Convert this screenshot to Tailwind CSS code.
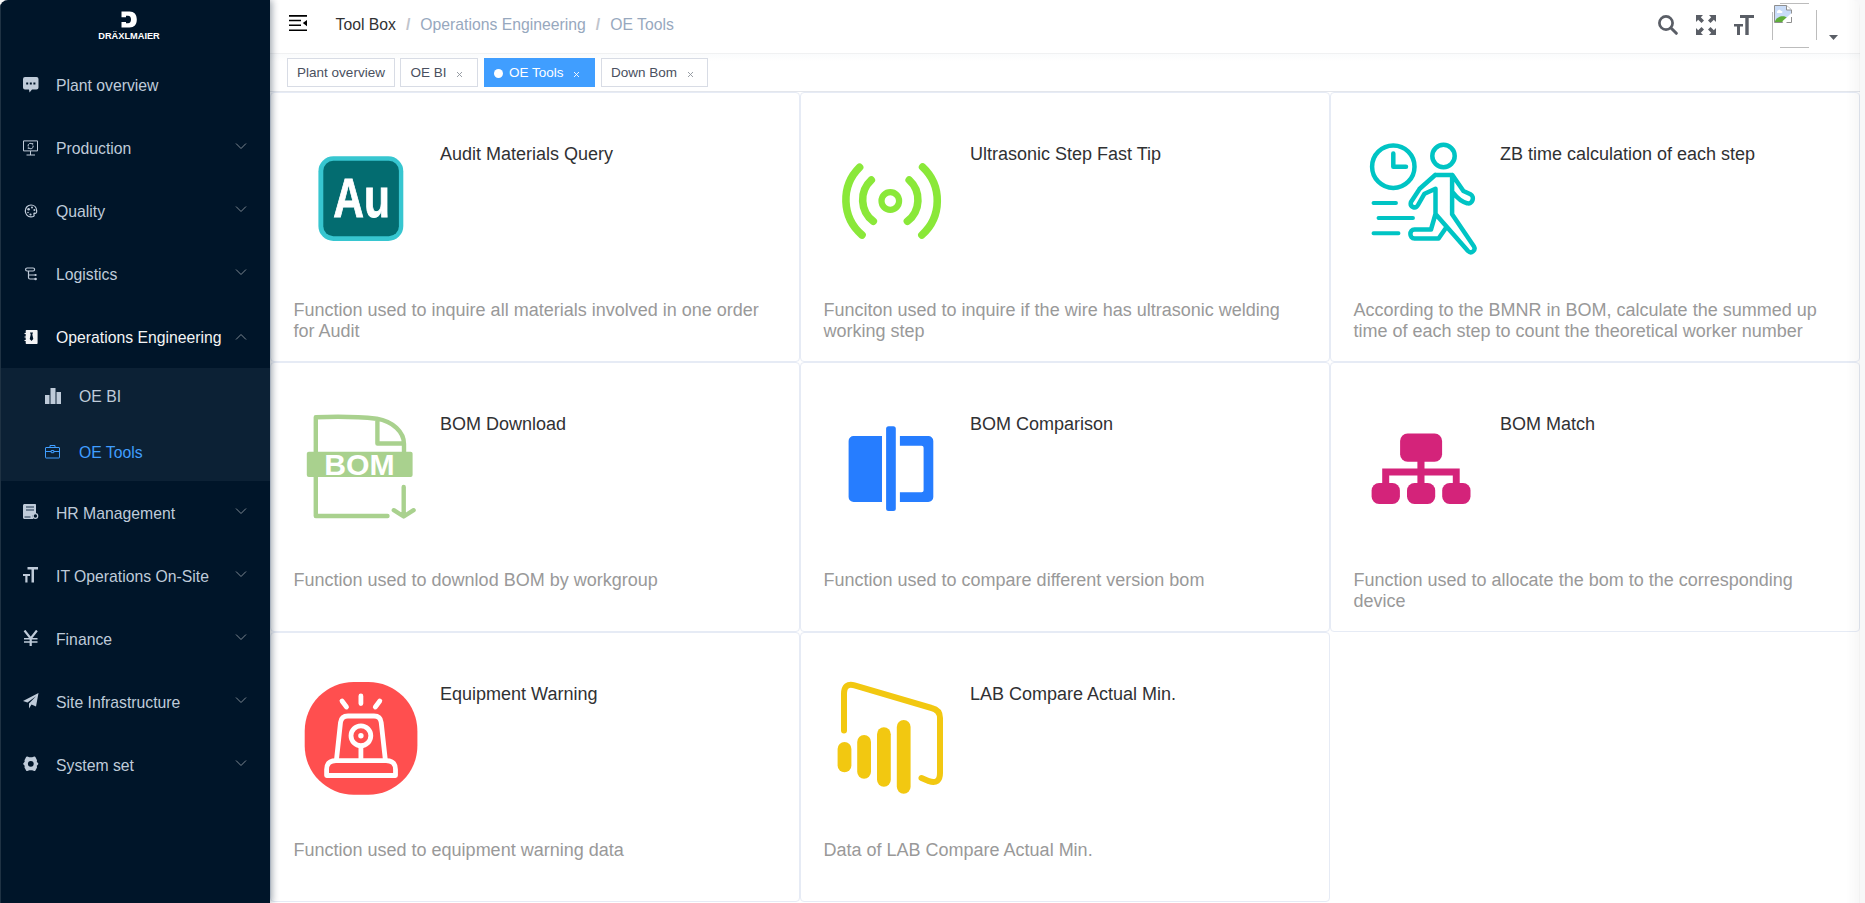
<!DOCTYPE html>
<html lang="en">
<head>
<meta charset="utf-8">
<title>OE Tools</title>
<script src="https://cdn.jsdelivr.net/npm/@tailwindcss/browser@4"></script>
</head>
<body class="bg-[#f7f7f8] font-['Liberation_Sans',Arial,sans-serif]">
<div class="flex h-[903px] w-[1860px] overflow-hidden rounded-t-lg bg-white">

  <!-- Sidebar -->
  <aside class="z-10 flex w-[270px] shrink-0 flex-col border-l border-[#1f3243] bg-[#001529] text-[15.75px] text-[#bfcbd9] shadow-[2px_0_7px_rgba(0,21,41,0.38)]">
    <div class="flex h-[53px] shrink-0 justify-center pr-3">
      <svg class="ml-[-1px] h-[53px] w-[70px]" viewBox="0 0 70 53" fill="#fff">
        <path fill-rule="evenodd" d="M27.500 11.500h8c4.600 0 7.300 2.800 7.300 8s-2.700 8-7.300 8h-8v-5.500h4.500v1.300h2c2 0 3-1.400 3-3.800s-1-3.800-3-3.800h-2v1.600h-4.500z"/>
        <text x="4.300" y="38.900" font-size="9.700" font-weight="700" textLength="61.500" lengthAdjust="spacingAndGlyphs">DRÄXLMAIER</text>
      </svg>
    </div>
    <nav class="flex flex-col">
      <div class="flex h-[63px] items-center pl-[22px] pt-px">
        <svg class="size-4" viewBox="0 0 16 16"><path fill="#bfcbd9" d="M2 0h11.500a2 2 0 0 1 2 2v8.500a2 2 0 0 1-2 2H9L6.500 15.500 6 12.500H2a2 2 0 0 1-2-2V2a2 2 0 0 1 2-2z"/><g fill="#001529"><rect x="3.200" y="5.500" width="2" height="2"/><rect x="6.800" y="5.500" width="2" height="2"/><rect x="10.400" y="5.500" width="2" height="2"/></g></svg>
        <span class="ml-[17px] pt-px">Plant overview</span>
      </div>
      <div class="flex h-[63px] items-center pl-[22px] pt-px">
        <svg class="size-4" viewBox="0 0 16 16" fill="none" stroke="#bfcbd9"><path d="M.5.900h14v10H.5zM7.500 11v4M3.500 15h8.500"/><path d="M5.200 6.500a2.400 2.400 0 0 1 4.200-2.200M10 5.500a2.400 2.400 0 0 1-4.300 2.100M9.700 3v1.600M5.300 9V7.400"/></svg>
        <span class="ml-[17px] pt-px">Production</span>
        <svg class="mb-[4px] ml-auto mr-[23px] h-1.5 w-3" viewBox="0 0 12 6" fill="none" stroke="#7d8791"><path d="m1 .5 5 5 5-5"/></svg>
      </div>
      <div class="flex h-[63px] items-center pl-[22px] pt-px">
        <svg class="size-4" viewBox="0 0 16 16" fill="none" stroke="#bfcbd9" stroke-width="1.200"><path d="M11.500 10.200c1.500.400 2.300-.500 2.200-2.400C13.500 4.600 11.300 2 8 2S2.300 4.700 2.300 8s2.400 5.800 5.500 5.900c2 .100 3.500-.600 3.400-1.600-.1-.8-.9-1.900.3-2.100z"/><g fill="#bfcbd9" stroke="none"><circle cx="5.600" cy="6.200" r="1.300"/><circle cx="9" cy="4.600" r="1"/><circle cx="11.400" cy="7" r="1"/><circle cx="5" cy="9.500" r=".8"/><circle cx="7.500" cy="11.500" r="1.100"/></g></svg>
        <span class="ml-[17px] pt-px">Quality</span>
        <svg class="mb-[4px] ml-auto mr-[23px] h-1.5 w-3" viewBox="0 0 12 6" fill="none" stroke="#7d8791"><path d="m1 .5 5 5 5-5"/></svg>
      </div>
      <div class="flex h-[63px] items-center pl-[22px] pt-px">
        <svg class="size-4" viewBox="0 0 16 16" fill="none" stroke="#bfcbd9" stroke-width="1.200"><rect x="2.600" y="2" width="9" height="3" rx="1.500"/><path d="M5.500 5v6.500a1.500 1.500 0 0 0 1.500 1.500h6M5.500 9h7.500"/><g fill="#bfcbd9" stroke="none"><circle cx="12.600" cy="9" r="1.100"/><circle cx="12.600" cy="13" r="1.300"/></g></svg>
        <span class="ml-[17px] pt-px">Logistics</span>
        <svg class="mb-[4px] ml-auto mr-[23px] h-1.5 w-3" viewBox="0 0 12 6" fill="none" stroke="#7d8791"><path d="m1 .5 5 5 5-5"/></svg>
      </div>
      <div class="flex h-[63px] items-center pl-[22px] pt-px text-[#f4f4f5]">
        <svg class="size-4" viewBox="0 0 16 16"><path fill="#f4f4f5" d="M3.500 1h10.300c.5 0 .8.300.8.800v12.400c0 .5-.3.800-.8.800H3.500c-.5 0-.8-.3-.8-.8V12H1.500v-1h1.200V8.500H1.500v-1h1.200V5H1.500V4h1.200V1.800c0-.5.300-.8.800-.8z"/><path fill="#001529" d="M7 3.500h3L9.300 5.500l1 4.500-1.800 2-1.800-2 1-4.500z"/></svg>
        <span class="ml-[17px] pt-px">Operations Engineering</span>
        <svg class="ml-auto mr-[23px] h-1.5 w-3" viewBox="0 0 12 6" fill="none" stroke="#7d8791"><path d="m1 5.500 5-5 5 5"/></svg>
      </div>
      <div class="bg-[#0c2135]">
        <div class="flex h-[56.5px] items-center pl-[44px]">
          <svg class="size-4" viewBox="0 0 16 16" fill="#bfcbd9"><path d="M0 7h4.500v9H0zM5.500 0h5v16h-5zM11.500 4h4.500v12h-4.500z"/></svg>
          <span class="ml-[18px] pt-px">OE BI</span>
        </div>
        <div class="flex h-[56.5px] items-center pl-[44px] text-[#409eff]">
          <svg class="mb-0.5 size-4" viewBox="0 0 16 16" fill="none" stroke="#409eff"><rect x=".5" y="3.500" width="14" height="10.500" rx=".5"/><path d="M5 3.500v-2h5v2M.5 7.500h5.500M9 7.500h5.500M6.200 6.500h2.600v2.200H6.200z"/></svg>
          <span class="ml-[18px] pt-px">OE Tools</span>
        </div>
      </div>
      <div class="flex h-[63px] items-center pl-[22px] pt-px">
        <svg class="mb-0.5 size-4" viewBox="0 0 16 16"><path fill="#bfcbd9" d="M1.500 0H12c.6 0 1 .400 1 1v8l-3.500 2.500.8 3.500H1.500C.7 15 0 14.300 0 13.500v-12C0 .700.7 0 1.500 0z"/><path d="M3 3h8M3 6h8M1.500 13h6" stroke="#52657a" stroke-width="1.300"/><circle cx="12.400" cy="12" r="2.300" fill="#001529" stroke="#bfcbd9" stroke-width="1.200"/></svg>
        <span class="ml-[17px] pt-px">HR Management</span>
        <svg class="mb-[5px] ml-auto mr-[23px] h-1.5 w-3" viewBox="0 0 12 6" fill="none" stroke="#7d8791"><path d="m1 .5 5 5 5-5"/></svg>
      </div>
      <div class="flex h-[63px] items-center pl-[22px] pt-px">
        <svg class="mb-0.5 size-4" viewBox="0 0 16 16" fill="#bfcbd9"><path d="M4.500 0H15v2.500h-4V15.500H8.500V2.500h-4zM0 7h7v2H4.500v6.500H2.300V9H0z"/></svg>
        <span class="ml-[17px] pt-px">IT Operations On-Site</span>
        <svg class="mb-[5px] ml-auto mr-[23px] h-1.5 w-3" viewBox="0 0 12 6" fill="none" stroke="#7d8791"><path d="m1 .5 5 5 5-5"/></svg>
      </div>
      <div class="flex h-[63px] items-center pl-[22px] pt-px">
        <svg class="mb-0.5 size-4" viewBox="0 0 16 16" fill="none" stroke="#bfcbd9"><path stroke-width="2.200" d="m1.500.500 6.200 8 6.200-8M7.700 8v8"/><path stroke-width="1.500" d="M1 8.800h13.500M1 12h13.500"/></svg>
        <span class="ml-[17px] pt-px">Finance</span>
        <svg class="mb-[5px] ml-auto mr-[23px] h-1.5 w-3" viewBox="0 0 12 6" fill="none" stroke="#7d8791"><path d="m1 .5 5 5 5-5"/></svg>
      </div>
      <div class="flex h-[63px] items-center pl-[22px] pt-px">
        <svg class="mb-0.5 size-4" viewBox="0 0 16 16" fill="#bfcbd9"><path d="M15.500 0 13 13.500 8.500 11.500 6 15.500V10.500L13 3.200 4.500 9.500 0 8z"/></svg>
        <span class="ml-[17px] pt-px">Site Infrastructure</span>
        <svg class="mb-[5px] ml-auto mr-[23px] h-1.5 w-3" viewBox="0 0 12 6" fill="none" stroke="#7d8791"><path d="m1 .5 5 5 5-5"/></svg>
      </div>
      <div class="flex h-[63px] items-center pl-[22px] pt-px">
        <svg class="mb-0.5 size-4" viewBox="0 0 16 16"><path fill="#bfcbd9" stroke="#bfcbd9" stroke-width="2" stroke-linejoin="round" d="M4 1.500 6 2.200h3.500L11.500 1.500 13 4.500 12.700 6l1.600 1.800L12.700 9.500l.3 1.700-1.500 2.800-2-.7H6l-2 .7L2.500 11.200l.3-1.700L1.200 7.800 2.800 6l-.3-1.500z"/><circle cx="7.800" cy="7.800" r="2.900" fill="#001529"/></svg>
        <span class="ml-[17px] pt-px">System set</span>
        <svg class="mb-[5px] ml-auto mr-[23px] h-1.5 w-3" viewBox="0 0 12 6" fill="none" stroke="#7d8791"><path d="m1 .5 5 5 5-5"/></svg>
      </div>
    </nav>
  </aside>

  <!-- Main column -->
  <div class="relative flex w-[1590px] flex-col">
    <header class="flex h-[54px] shrink-0 items-start border-b border-[#f0f1f2]">
      <svg class="ml-[19px] mt-[15px] h-[17px] w-[18px]" viewBox="0 0 18 17" fill="#000"><path d="M0 0h18v1.700H0zM0 4.800h12v1.500H0zM0 9.600h12v1.500H0zM0 14.400h18V16H0zM18 5v6.200L13.800 8.100z"/></svg>
      <div class="ml-[28.5px] flex pt-[15px] text-[15.75px] leading-[19px] text-[#97a8be]">
        <span class="text-[#303133]">Tool Box</span><span class="mx-[10px] font-bold text-[#c0c4cc]">/</span><span>Operations Engineering</span><span class="mx-[10px] font-bold text-[#c0c4cc]">/</span><span>OE Tools</span>
      </div>
      <div class="ml-auto flex items-start">
        <svg class="mt-[15px] size-5" viewBox="0 0 20 20" fill="none" stroke="#5a5e66"><circle cx="8" cy="8" r="6.600" stroke-width="2.700"/><path stroke-width="3" stroke-linecap="round" d="m13 13 5.300 5.300"/></svg>
        <svg class="ml-[18px] mt-[15px] size-5" viewBox="0 0 20 20"><g fill="#5a5e66"><path d="M0 0h7L4.800 2.200 8 5.400 5.500 8 2.200 4.800 0 7zM20 0h-7l2.200 2.200L12 5.400 14.500 8l3.300-3.200L20 7zM0 20h7l-2.200-2.200L8 14.600 5.500 12l-3.300 3.200L0 13zM20 20h-7l2.200-2.200-3.200-3.200 2.500-2.600 3.300 3.200L20 13z"/></g></svg>
        <svg class="ml-[18px] mt-[15px] size-5" viewBox="0 0 20 20" fill="#5a5e66"><path d="M6 0h14v3h-5.300v17h-3.400V3H6zM0 9h9v2.500H6V20H3v-8.500H0z"/></svg>
        <!-- avatar placeholder with the missing-picture glyph -->
        <svg class="ml-[18px] mt-[3px] h-[45px] w-[45px]" viewBox="0 0 45 45"><g fill="none" stroke="#bcbcbc"><path d="M8 .5h29M8 44.500h29M.5 9v28M44.500 7v30"/></g><path fill="#c9dcf8" stroke="#8f8f8f" d="M2.500 2.500h12l5 4.500v4.500l-9 8h-8z"/><path fill="#fff" d="M5 9c0-2 3-3.500 4-1 2 0 2 2 .5 2H5z"/><path fill="#5fae3a" d="M3 18.500c1-5 9-7 12.500-3.500l-4.500 4H3z"/><path fill="#fff" stroke="#8f8f8f" d="M14.500 2.500V7h5"/><path fill="none" stroke="#8f8f8f" d="M19.500 14v5.500H14.500"/><path stroke="#fff" stroke-width="2" d="m11 19 9-8"/></svg>
        <svg class="ml-[12px] mr-[22px] mt-[35px] h-[5px] w-[9px]" viewBox="0 0 9 5" fill="#5a5e66"><path d="M0 0h9L4.500 5z"/></svg>
      </div>
    </header>

    <div class="flex h-[38px] shrink-0 items-start border-b border-[#e3e6ec] bg-gradient-to-b from-[#fafbfc] to-white to-20% pl-[17px] pt-1 text-[13.5px] text-[#495060]">
      <div class="flex h-[29px] w-[108px] items-center justify-center border border-[#d8dce5] bg-white pt-0.5">Plant overview</div>
      <div class="ml-[5px] flex h-[29px] w-[78px] items-center border border-[#d8dce5] bg-white pl-[9.5px] pt-0.5">OE BI<svg class="ml-[10px] mt-px size-[5px]" viewBox="0 0 5 5" stroke="#8f949c" stroke-width=".9"><path d="m0 0 5 5M5 0 0 5"/></svg></div>
      <div class="ml-[6px] flex h-[29px] w-[111px] items-center bg-[#409eff] pl-[10px] pt-0.5 text-white"><i class="mr-[6px] size-[9px] rounded-full bg-white"></i>OE Tools<svg class="ml-[10px] mt-px size-[5px]" viewBox="0 0 5 5" stroke="#fff" stroke-width=".9"><path d="m0 0 5 5M5 0 0 5"/></svg></div>
      <div class="ml-[6px] flex h-[29px] w-[107px] items-center border border-[#d8dce5] bg-white pl-[9px] pt-0.5">Down Bom<svg class="ml-[10.5px] mt-px size-[5px]" viewBox="0 0 5 5" stroke="#8f949c" stroke-width=".9"><path d="m0 0 5 5M5 0 0 5"/></svg></div>
    </div>

    <main class="grid grid-cols-3 text-[18px] leading-[21px] text-[#303133]">
      <section class="h-[270px] rounded border border-[#e6ebf5] bg-white pl-[30px] pt-[45px]">
        <div class="flex h-[162px]">
          <svg class="size-[120px]" viewBox="0 0 120 120"><rect x="17.400" y="18.300" width="84.900" height="84.700" rx="15" fill="#37c6d0"/><rect x="22.300" y="22.700" width="75.600" height="75.600" rx="10" fill="#036c70"/><text transform="translate(32.200 79.300) scale(.76 1)" font-size="56" font-weight="700" fill="#fff" stroke="#fff" stroke-width=".9">Au</text></svg>
          <h3 class="ml-[19px] mt-[6px]">Audit Materials Query</h3>
        </div>
        <p class="-ml-[7.5px] w-[482px] text-[#999]">Function used to inquire all materials involved in one order for Audit</p>
      </section>
      <section class="h-[270px] rounded border border-[#e6ebf5] bg-white pl-[30px] pt-[45px]">
        <div class="flex h-[162px]">
          <svg class="size-[120px]" viewBox="0 0 120 120" fill="none" stroke="#8ae839" stroke-linecap="round"><circle cx="59.300" cy="63" r="8.800" stroke-width="6.200"/><path stroke-width="7.600" d="M40.300 42A27 27 0 0 0 42.300 83.300M28.600 29.300A46 46 0 0 0 31 97M78.200 42A27 27 0 0 1 76.400 83.300M91.600 29A46 46 0 0 1 90.900 97"/></svg>
          <h3 class="ml-[19px] mt-[6px]">Ultrasonic Step Fast Tip</h3>
        </div>
        <p class="-ml-[7.5px] w-[482px] text-[#999]">Funciton used to inquire if the wire has ultrasonic welding working step</p>
      </section>
      <section class="h-[270px] rounded border border-[#e6ebf5] bg-white pl-[30px] pt-[45px]">
        <div class="flex h-[162px]">
          <svg class="size-[120px]" viewBox="0 0 120 120" fill="none" stroke="#00c4c4" stroke-width="4.500" stroke-linejoin="round" stroke-linecap="round"><circle cx="32.300" cy="28.700" r="21.200"/><path d="M32.300 15.500v13.300h12.700"/><circle cx="82.500" cy="18" r="11.200" stroke-width="4.500"/><path stroke-width="3.900" d="M12.500 65h22.500M17.500 80h34.500M12.500 95.300h25"/><path d="M74.200 37H91.100V76.300L113 108.500C115 112 110.500 116.500 107 113L74.500 76V50.700L63.500 55.700 57 67C54.500 71.500 48.500 69 50 64L58.700 50.700zM74.200 37 58.700 50.700M91.400 37 102.400 53 109.500 56.200C114 58.500 111.500 67 106 65.200 101 64 96.500 60.500 92 54.700M74.500 76 70 91.500H53.500C48 91.500 48 100.500 53.500 100.500H77.600L85.200 89.500"/></svg>
          <h3 class="ml-[19px] mt-[6px]">ZB time calculation of each step</h3>
        </div>
        <p class="-ml-[7.5px] w-[482px] text-[#999]">According to the BMNR in BOM, calculate the summed up time of each step to count the theoretical worker number</p>
      </section>

      <section class="h-[270px] rounded border border-[#e6ebf5] bg-white pl-[30px] pt-[45px]">
        <div class="flex h-[162px]">
          <svg class="size-[120px]" viewBox="0 0 120 120"><g fill="none" stroke="#a9d18e" stroke-width="4.400" stroke-linecap="round" stroke-linejoin="round"><path d="M86.500 108H14.800V9.300C38 8.300 57 8.700 75.700 10.700 92 13.500 103 24 103 36V46M76.400 11V35.500H103"/><path d="M102.700 79v28M92.800 102.200l9.900 6.300 9.900-6.300"/></g><rect x="5.800" y="43.700" width="105.800" height="25.300" rx="2" fill="#a9d18e"/><text x="23.300" y="66.500" font-size="30" font-weight="700" fill="#fff" textLength="70.500" lengthAdjust="spacingAndGlyphs">BOM</text></svg>
          <h3 class="ml-[19px] mt-[6px]">BOM Download</h3>
        </div>
        <p class="-ml-[7.5px] w-[482px] text-[#999]">Function used to downlod BOM by workgroup</p>
      </section>
      <section class="h-[270px] rounded border border-[#e6ebf5] bg-white pl-[30px] pt-[45px]">
        <div class="flex h-[162px]">
          <svg class="size-[120px]" viewBox="0 0 120 120" fill="#267dff"><path d="M51 28v66H22.600a5 5 0 0 1-5-5V33a5 5 0 0 1 5-5zM68.900 28h28.400a5 5 0 0 1 5 5v56a5 5 0 0 1-5 5H68.900V84.200h21.700a2 2 0 0 0 2-2V39.700a2 2 0 0 0-2-2H68.900z"/><rect x="55.100" y="18.300" width="9.700" height="84.700" rx="2.500"/></svg>
          <h3 class="ml-[19px] mt-[6px]">BOM Comparison</h3>
        </div>
        <p class="-ml-[7.5px] w-[482px] text-[#999]">Function used to compare different version bom</p>
      </section>
      <section class="h-[270px] rounded border border-[#e6ebf5] bg-white pl-[30px] pt-[45px]">
        <div class="flex h-[162px]">
          <svg class="size-[120px]" viewBox="0 0 120 120" fill="#d4237a"><rect x="39.100" y="25.500" width="42" height="28.200" rx="7.500"/><rect x="10.600" y="75" width="28.300" height="21" rx="7.500"/><rect x="46" y="75" width="28.200" height="21" rx="7.500"/><rect x="81.200" y="75" width="28.300" height="21" rx="7.500"/><path d="M56.400 53v7.400H21.200V76h7V67.600h28.200V76h7.100V67.600h28.300V76h6.900V60.400H63.500V53z"/></svg>
          <h3 class="ml-[19px] mt-[6px]">BOM Match</h3>
        </div>
        <p class="-ml-[7.5px] w-[482px] text-[#999]">Function used to allocate the bom to the corresponding device</p>
      </section>

      <section class="h-[270px] rounded border border-[#e6ebf5] bg-white pl-[30px] pt-[45px]">
        <div class="flex h-[162px]">
          <svg class="size-[120px]" viewBox="0 0 120 120"><rect x="3.700" y="4" width="112.700" height="112.700" rx="49" fill="#ff4f4f"/><g fill="none" stroke="#fff" stroke-width="4.800" stroke-linejoin="round"><path stroke-linecap="round" d="M59.900 18v7.500M41 23l4.500 6M78.800 23l-4.500 6"/><path d="M35.500 81.500 39.500 44.500Q40.300 38 47 38H73Q79.500 38 80.200 44.500L84.300 81.500"/><path d="M25.600 97.500V91.500Q25.600 82.700 35 82.700H85Q94.500 82.700 94.500 91.500V97.500z"/><circle cx="59.900" cy="57.700" r="9.900"/><path d="M59.900 68v14"/></g><circle cx="59.900" cy="57.700" r="2.700" fill="#fff"/></svg>
          <h3 class="ml-[19px] mt-[6px]">Equipment Warning</h3>
        </div>
        <p class="-ml-[7.5px] w-[482px] text-[#999]">Function used to equipment warning data</p>
      </section>
      <section class="h-[270px] rounded border border-[#e6ebf5] bg-white pl-[30px] pt-[45px]">
        <div class="flex h-[162px]">
          <svg class="size-[120px]" viewBox="0 0 120 120"><path fill="none" stroke="#f2c811" stroke-width="6" stroke-linecap="round" d="M13 52.500V16Q13 4.500 23.500 7.300L100.500 30Q109 32 109 40V95Q109 106.500 98 103.200L90.500 100"/><g fill="#f2c811"><rect x="6.600" y="64" width="13.800" height="30.300" rx="6.900"/><rect x="26.200" y="57" width="13.800" height="43.700" rx="6.900"/><rect x="46" y="49.300" width="13.800" height="59.400" rx="6.900"/><rect x="65.800" y="42" width="13.800" height="73.700" rx="6.900"/></g></svg>
          <h3 class="ml-[19px] mt-[6px]">LAB Compare Actual Min.</h3>
        </div>
        <p class="-ml-[7.5px] w-[482px] text-[#999]">Data of LAB Compare Actual Min.</p>
      </section>
    </main>
    <div class="pointer-events-none absolute inset-y-0 right-0 w-[14px] border-r border-black/5 bg-gradient-to-r from-transparent to-black/3"></div>
  </div>
</div>
</body>
</html>
